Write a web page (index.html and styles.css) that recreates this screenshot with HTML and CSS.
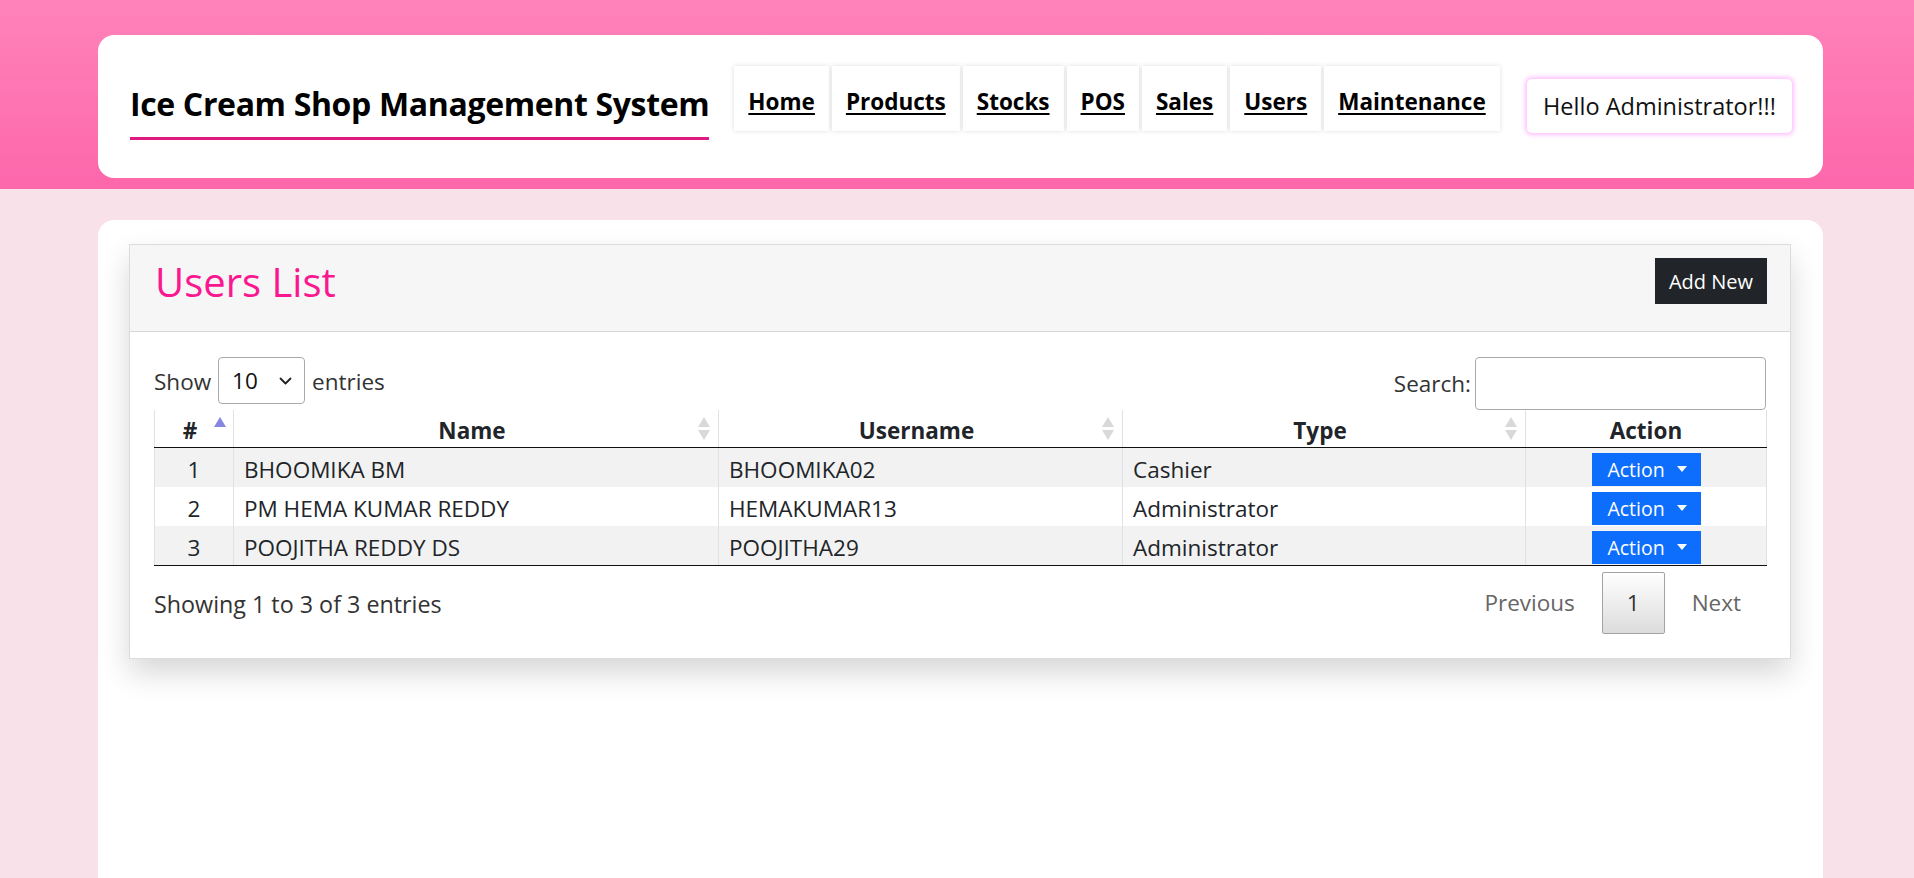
FILE: index.html
```html
<!DOCTYPE html>
<html lang="en">
<head>
<meta charset="utf-8">
<title>Users List - Ice Cream Shop Management System</title>
<link rel="stylesheet" href="styles.css">
</head>
<body>
<div class="topband">
  <header class="topbar">
    <h1 class="brand">Ice Cream Shop Management System</h1>
    <nav class="mainnav">
      <a href="#" class="nav-item">Home</a>
      <a href="#" class="nav-item">Products</a>
      <a href="#" class="nav-item">Stocks</a>
      <a href="#" class="nav-item">POS</a>
      <a href="#" class="nav-item">Sales</a>
      <a href="#" class="nav-item">Users</a>
      <a href="#" class="nav-item">Maintenance</a>
    </nav>
    <div class="greet">Hello Administrator!!!</div>
  </header>
</div>

<main class="page">
  <section class="panel">
    <div class="panel-head">
      <h3 class="panel-title">Users List</h3>
      <button type="button" class="btn-add">Add New</button>
    </div>
    <div class="panel-body">
      <div class="dt-controls">
        <div class="dt-length">
          <span>Show</span>
          <span class="fake-select">10
            <svg class="chev" width="13" height="8" viewBox="0 0 13 8"><path d="M1.5 1.5 L6.5 6.5 L11.5 1.5" fill="none" stroke="#222" stroke-width="1.8" stroke-linecap="round" stroke-linejoin="round"/></svg>
          </span>
          <span>entries</span>
        </div>
        <label class="dt-search">Search:<input type="search" class="search-input"></label>
      </div>

      <table class="dt">
        <colgroup>
          <col class="c-num">
          <col class="c-name">
          <col class="c-user">
          <col class="c-type">
          <col class="c-act">
        </colgroup>
        <thead>
          <tr>
            <th class="sort sort-asc">#</th>
            <th class="sort">Name</th>
            <th class="sort">Username</th>
            <th class="sort">Type</th>
            <th>Action</th>
          </tr>
        </thead>
        <tbody>
          <tr>
            <td class="num">1</td>
            <td>BHOOMIKA BM</td>
            <td>BHOOMIKA02</td>
            <td>Cashier</td>
            <td class="act"><span class="btn-action">Action<span class="caret"></span></span></td>
          </tr>
          <tr>
            <td class="num">2</td>
            <td>PM HEMA KUMAR REDDY</td>
            <td>HEMAKUMAR13</td>
            <td>Administrator</td>
            <td class="act"><span class="btn-action">Action<span class="caret"></span></span></td>
          </tr>
          <tr>
            <td class="num">3</td>
            <td>POOJITHA REDDY DS</td>
            <td>POOJITHA29</td>
            <td>Administrator</td>
            <td class="act"><span class="btn-action">Action<span class="caret"></span></span></td>
          </tr>
        </tbody>
      </table>

      <div class="dt-footer">
        <div class="dt-info">Showing 1 to 3 of 3 entries</div>
        <div class="dt-paging">
          <span class="pg-btn pg-disabled">Previous</span>
          <span class="pg-btn pg-current">1</span>
          <span class="pg-btn pg-disabled">Next</span>
        </div>
      </div>
    </div>
  </section>
</main>
</body>
</html>
```
FILE: styles.css
```css
* { box-sizing: border-box; }

html, body {
  margin: 0;
  padding: 0;
}

body {
  background: #f9e1ea;
  font-family: "Open Sans", "Noto Sans", sans-serif;
  font-size: 22.5px;
  color: #212529;
  overflow: hidden;
}

/* ---------- top band ---------- */
.topband {
  height: 189px;
  padding-top: 35px;
  background: linear-gradient(180deg, #ff83ba 0%, #fd67ab 100%);
}

.topbar {
  width: 1725px;
  height: 143px;
  margin-left: 98px;
  background: #fff;
  border-radius: 16px;
  display: flex;
  align-items: flex-start;
  padding: 0 31px 0 32px;
}

.brand {
  margin: 48px 0 0 0;
  font-size: 32px;
  font-weight: 700;
  letter-spacing: -0.35px;
  line-height: 41px;
  color: #000;
  padding-bottom: 13px;
  border-bottom: 3px solid #df1a82;
  white-space: nowrap;
}

.mainnav {
  display: flex;
  margin: 31px 0 0 25px;
  gap: 3px;
}

.nav-item {
  height: 65px;
  padding: 5px 14px 0 14px;
  display: flex;
  align-items: center;
  background: #fff;
  box-shadow: 0 0 5px rgba(0, 0, 0, 0.13);
  color: #000;
  font-weight: 700;
  font-size: 22.5px;
  text-decoration: underline;
  text-decoration-thickness: 2px;
  text-underline-offset: 3px;
  white-space: nowrap;
}

.greet {
  margin: 44px 0 0 auto;
  height: 54px;
  width: 265px;
  display: flex;
  align-items: center;
  justify-content: center;
  border-radius: 5px;
  background: #fff;
  box-shadow: 0 0 4px 2px rgba(255, 110, 255, 0.45);
  font-size: 23.5px;
  color: #111;
  white-space: nowrap;
}

/* ---------- page card ---------- */
.page {
  width: 1725px;
  height: 720px;
  margin: 31px 0 0 98px;
  background: #fff;
  border-radius: 16px;
  padding: 24px 32px 0 31px;
}

.panel {
  border: 1px solid #dcdcdc;
  background: #fff;
  box-shadow: 0 14px 28px rgba(0, 0, 0, 0.16);
}

.panel-head {
  height: 87px;
  display: flex;
  justify-content: space-between;
  align-items: flex-start;
  padding: 12px 23px 0 25px;
  background: #f6f6f6;
  border-bottom: 1px solid #d8d8d8;
}

.panel-title {
  margin: 0;
  font-size: 40px;
  font-weight: 500;
  line-height: 50px;
  color: #fa1890;
}

.btn-add {
  margin-top: 1px;
  height: 46px;
  padding: 0 14px;
  border: 0;
  border-radius: 0;
  background: #212529;
  color: #fff;
  font-family: inherit;
  font-size: 20px;
}

.panel-body {
  padding: 25px 24px 24px 24px;
}

/* ---------- datatable controls ---------- */
.dt-controls {
  height: 53px;
  display: flex;
  justify-content: space-between;
  align-items: flex-start;
}

.dt-length {
  display: flex;
  align-items: center;
  height: 47px;
  gap: 7px;
  color: #333;
}

.dt-length > span:first-child,
.dt-length > span:last-child {
  padding-top: 2px;
}

.fake-select {
  width: 87px;
  height: 47px;
  border: 1px solid #aaa;
  border-radius: 4px;
  display: flex;
  align-items: center;
  justify-content: space-between;
  padding: 0 12px 0 13px;
  color: #111;
  background: #fff;
}

.dt-search {
  display: flex;
  align-items: center;
  height: 53px;
  gap: 4px;
  color: #333;
}

.search-input {
  width: 291px;
  height: 53px;
  border: 1px solid #aaa;
  border-radius: 4px;
  background: #fff;
  font-family: inherit;
  font-size: 22px;
  padding: 0 8px;
}

/* ---------- table ---------- */
.dt {
  width: 1612px;
  border-collapse: collapse;
  table-layout: fixed;
}

.c-num { width: 79px; }
.c-name { width: 485px; }
.c-user { width: 404px; }
.c-type { width: 403px; }
.c-act { width: 241px; }

.dt th,
.dt td {
  border-left: 1px solid #dee2e6;
  border-right: 1px solid #dee2e6;
}

.dt thead th {
  height: 37px;
  padding: 5px 18px 0 10px;
  border-bottom: 1px solid #111;
  font-weight: 700;
  text-align: center;
  vertical-align: middle;
  position: relative;
  line-height: 30px;
  color: #212529;
}

.dt thead th:last-child { padding: 5px 10px 0 10px; }

.dt thead th.sort::before,
.dt thead th.sort::after {
  content: "";
  position: absolute;
  right: 8px;
  width: 0;
  height: 0;
  border-left: 6.5px solid transparent;
  border-right: 6.5px solid transparent;
}

.dt thead th.sort::before {
  top: 7px;
  border-bottom: 10px solid #d9d9d9;
}

.dt thead th.sort::after {
  top: 20px;
  border-top: 10px solid #d9d9d9;
}

.dt thead th.sort-asc::before {
  right: 7px;
  border-bottom-color: #8787e2;
}

.dt thead th.sort-asc::after {
  display: none;
}

.dt tbody td {
  height: 39px;
  padding: 5px 10px 0 10px;
  line-height: 34px;
  vertical-align: middle;
  white-space: nowrap;
}

.dt tbody tr:nth-child(odd) td { background: #f2f2f2; }
.dt tbody tr:last-child td { border-bottom: 1px solid #111; }

.dt td.num { text-align: center; }

.dt td.act {
  text-align: center;
  vertical-align: bottom;
  padding: 0 0 1px 0;
}

.btn-action {
  display: inline-flex;
  align-items: center;
  justify-content: center;
  gap: 12px;
  width: 109px;
  height: 33px;
  background: #0d6efd;
  color: #fff;
  font-size: 19.5px;
  line-height: 33px;
  vertical-align: bottom;
  padding-left: 2px;
}

.caret {
  width: 0;
  height: 0;
  border-left: 5.5px solid transparent;
  border-right: 5.5px solid transparent;
  border-top: 6px solid #fff;
}

/* ---------- footer ---------- */
.dt-footer {
  margin-top: 6px;
  display: flex;
  justify-content: space-between;
  align-items: center;
}

.dt-info {
  color: #333;
  font-size: 23.3px;
  padding-top: 2px;
}

.dt-paging {
  display: flex;
}

.pg-btn {
  margin-left: 2px;
  padding: 12px 24px;
  border: 1px solid transparent;
  border-radius: 2px;
  line-height: 36px;
  color: #333;
}

.pg-disabled { color: #666; }

.pg-current {
  border-color: #a3a3a3;
  background: linear-gradient(180deg, #ffffff 0%, #dcdcdc 100%);
  color: #333;
}
```
